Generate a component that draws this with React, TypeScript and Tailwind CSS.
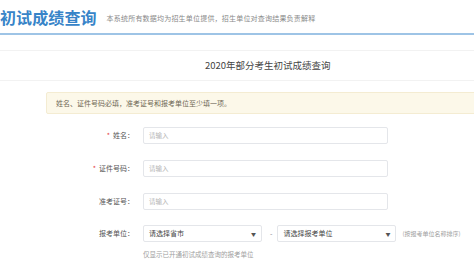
const Label = ({ text, required }: { text: string; required?: boolean }) => (
  <div className="w-[135px] shrink-0 text-right text-[7px] text-[#555] leading-none pr-[1px]">
    {required && <span className="text-[#e4393c] mr-[3px]">*</span>}
    {text}
  </div>
);

const TextInput = () => (
  <div className="ml-[8px] w-[245px] h-[17px] border border-[#e4e6ea] rounded-[2px] flex items-center pl-[5px] text-[6.5px] text-[#b5b5b5] leading-none">
    请输入
  </div>
);

const Select = ({ text }: { text: string }) => (
  <div className="w-[119px] h-[17px] border border-[#e4e6ea] rounded-[2px] flex items-center justify-between px-[5px] text-[7px] text-[#444] leading-none">
    <span>{text}</span>
    <span className="text-[5px] text-[#555]">▼</span>
  </div>
);

export default function App() {
  return (
    <div className="w-[474px] h-[266px] overflow-hidden bg-white font-['Noto_Sans_CJK_SC','Liberation_Sans',sans-serif]">
      {/* header */}
      <div className="h-[33px] flex items-center">
        <h1 className="ml-0 text-[16px] font-bold text-[#3784c8] tracking-[0.1px] leading-none">初试成绩查询</h1>
        <p className="ml-[10px] mt-[3px] text-[7px] tracking-[0.2px] text-[#8a8a8a] leading-none">本系统所有数据均为招生单位提供，招生单位对查询结果负责解释</p>
      </div>
      <div className="h-[2px] bg-[#9ec4e6]" />

      {/* section title */}
      <div className="mt-[15px] h-[31px] border-t border-b border-[#f2f2f2] flex items-center">
        <span className="ml-[205px] text-[9.5px] text-[#444] leading-none">2020年部分考生初试成绩查询</span>
      </div>

      {/* notice */}
      <div className="mt-[11px] ml-[46px] w-[450px] h-[22px] bg-[#fcf8e9] border border-[#f4ecd2] rounded-[2px] flex items-center pl-[9px] text-[7px] text-[#6f6855] leading-none">
        姓名、证件号码必填，准考证号和报考单位至少填一项。
      </div>

      {/* form */}
      <div className="mt-[13px] flex items-center">
        <Label text="姓名：" required />
        <TextInput />
      </div>
      <div className="mt-[16px] flex items-center">
        <Label text="证件号码：" required />
        <TextInput />
      </div>
      <div className="mt-[16px] flex items-center">
        <Label text="准考证号：" />
        <TextInput />
      </div>
      <div className="mt-[15px] flex items-center">
        <Label text="报考单位：" />
        <div className="ml-[8px] flex items-center">
          <Select text="请选择省市" />
          <span className="ml-[8px] mr-[5px] text-[7px] text-[#888] leading-none">-</span>
          <Select text="请选择报考单位" />
          <span className="ml-[6px] text-[6px] text-[#a0a0a0] leading-none">(按报考单位名称排序)</span>
        </div>
      </div>
      <div className="mt-[6px] ml-[143px] text-[6.5px] text-[#a0a0a0] leading-[12px]">仅显示已开通初试成绩查询的报考单位</div>
    </div>
  );
}
